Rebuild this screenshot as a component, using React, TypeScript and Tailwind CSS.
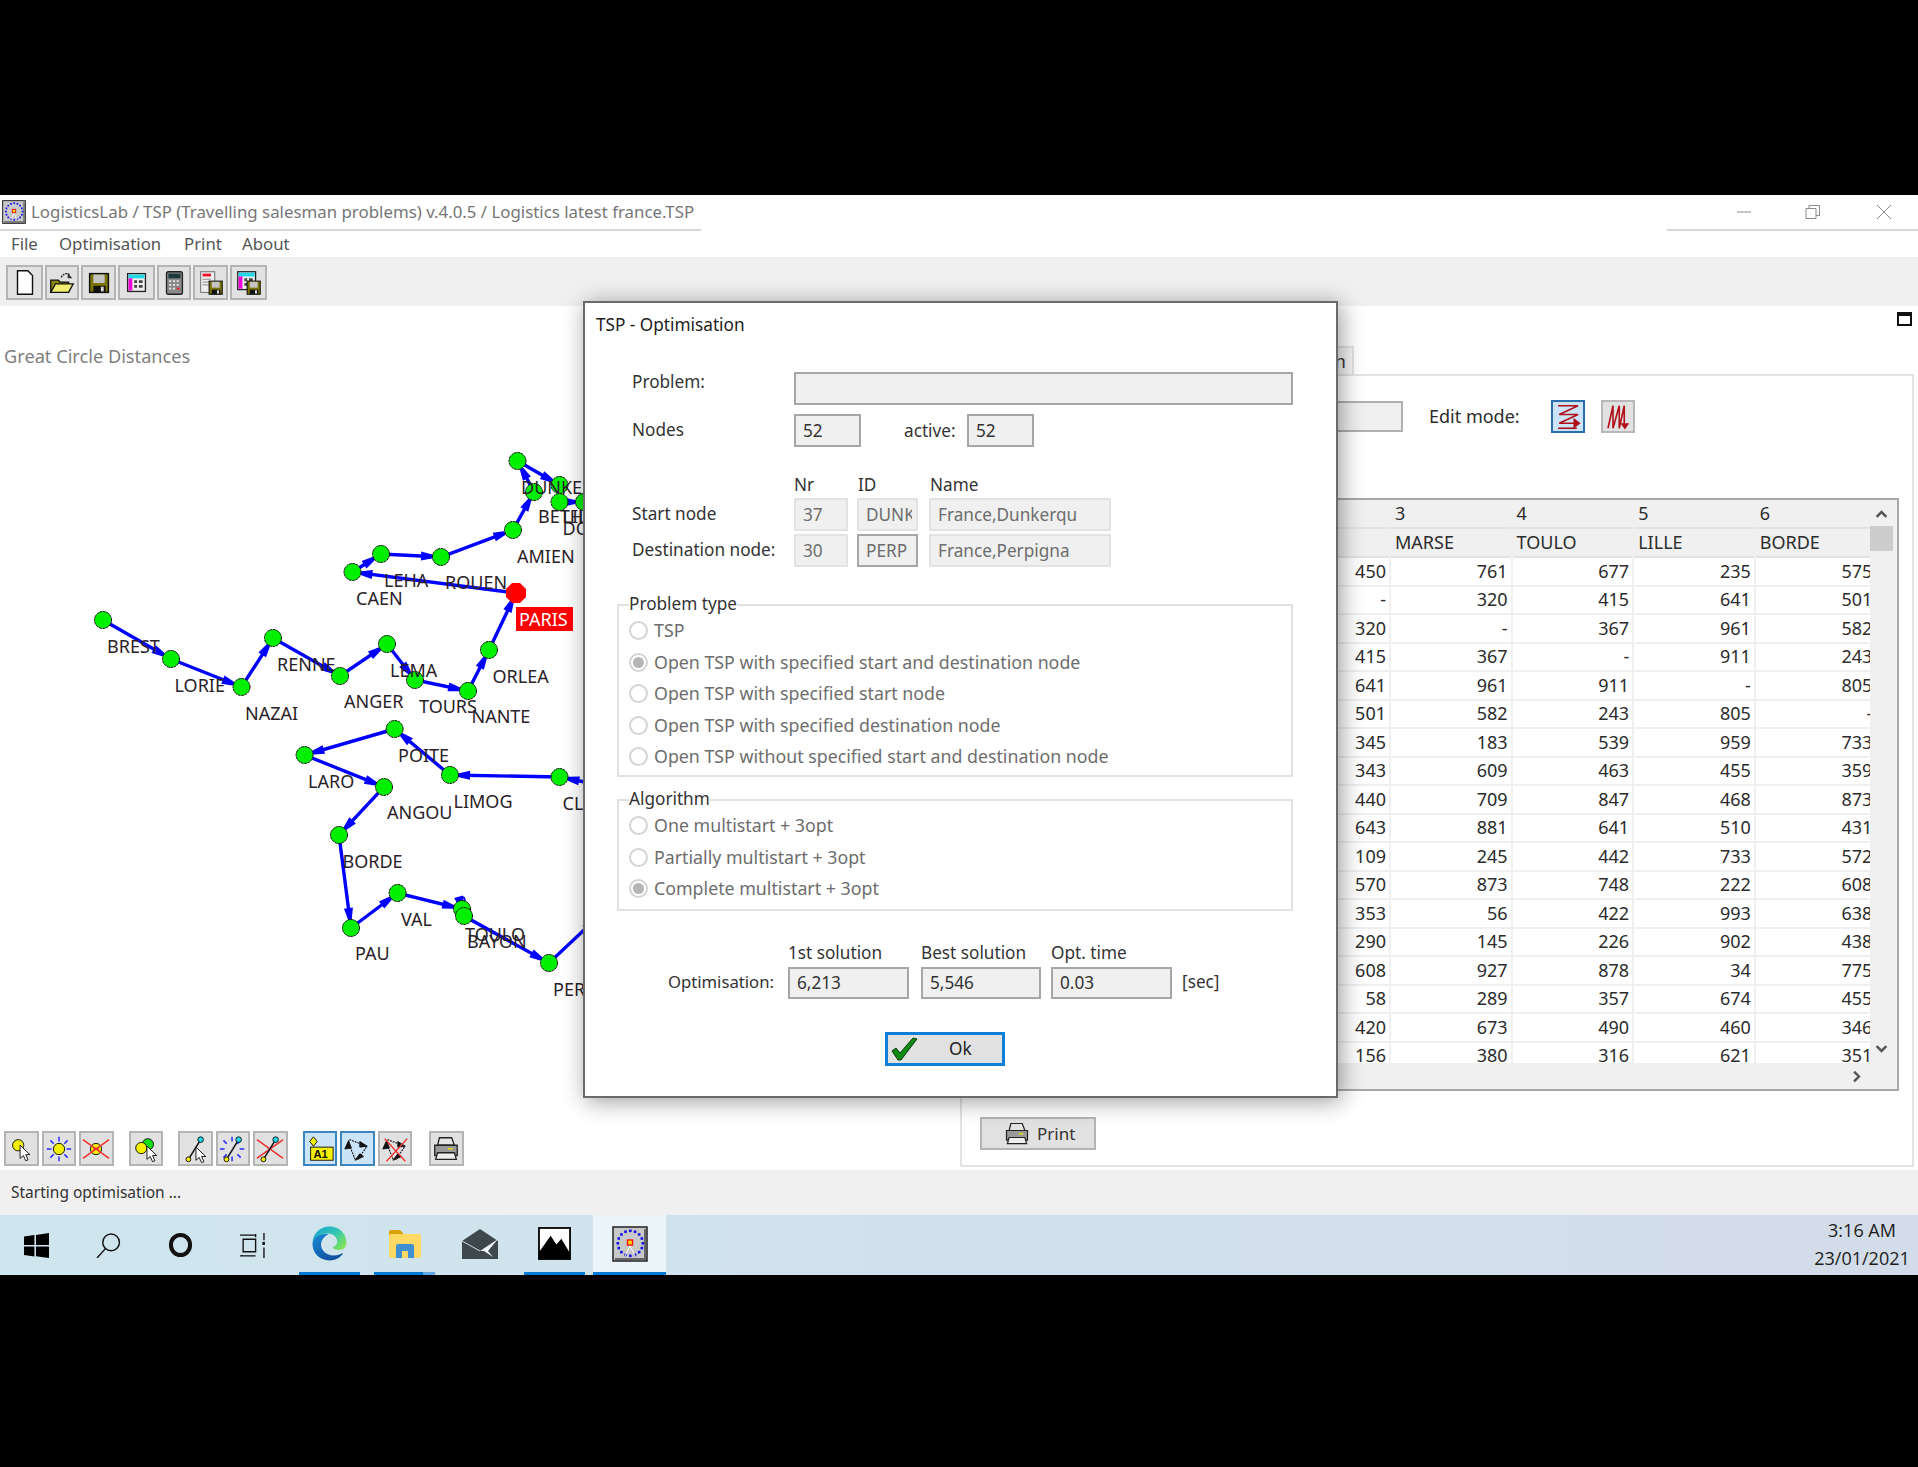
import type { ReactNode } from 'react';

const nodes: Record<string, [number, number]> = {
  BREST: [103, 620], LORIE: [171, 659], NAZAI: [241.5, 687], RENNE: [273, 638], ANGER: [340, 676],
  LEMA: [387, 644], TOURS: [415, 680], NANTE: [468, 691], ORLEA: [489, 650], PARIS: [516, 593],
  CAEN: [352.5, 572], LEHA: [381, 554], ROUEN: [441, 557], AMIEN: [513, 530], BETHU: [534, 492],
  DUNKE: [517.5, 461], LILLE: [559.5, 485], DOUAI: [559.5, 502], ARRAS: [584, 502],
  CLERM: [559.5, 777], LIMOG: [450, 775], POITE: [394.6, 729], LARO: [304.6, 755], ANGOU: [384, 787],
  BORDE: [339, 835], PAU: [351, 928], VAL: [397.6, 893], TOULO: [462, 909], BAYON: [464, 916], PER: [549, 963],
  EAST: [600, 915], RIGHT: [600, 785],
};

const chains = [
  ['BREST', 'LORIE', 'NAZAI', 'RENNE', 'ANGER', 'LEMA', 'TOURS', 'NANTE', 'ORLEA', 'PARIS', 'CAEN', 'LEHA', 'ROUEN', 'AMIEN', 'BETHU', 'DUNKE', 'LILLE', 'DOUAI', 'ARRAS'],
  ['RIGHT', 'CLERM', 'LIMOG', 'POITE', 'LARO', 'ANGOU', 'BORDE', 'PAU', 'VAL', 'TOULO', 'BAYON', 'PER', 'EAST'],
];

const labels: [string, number, number][] = [
  ['BREST', 107, 653], ['LORIE', 174.5, 692], ['NAZAI', 245, 720], ['RENNE', 277, 671], ['ANGER', 344, 708],
  ['LEMA', 390, 677], ['TOURS', 419, 713], ['NANTE', 471.5, 723], ['ORLEA', 492.5, 683], ['AMIEN', 517, 563],
  ['ROUEN', 445, 589], ['LEHA', 384, 587], ['CAEN', 356, 605], ['DUNKE', 521, 494], ['BETHU', 538, 523],
  ['LILLE', 562.6, 523], ['DOUAI', 562.6, 535], ['POITE', 398, 762], ['LARO', 308, 788], ['LIMOG', 453.5, 808],
  ['CLERM', 562.6, 810], ['ANGOU', 387, 819], ['BORDE', 342.5, 868], ['VAL', 401, 926], ['PAU', 355, 960],
  ['TOULO', 465, 941], ['BAYON', 467, 948], ['PERPI', 553, 996],
];

const columns = [
  { nr: '2', name: '', values: ['450', '-', '320', '415', '641', '501', '345', '343', '440', '643', '109', '570', '353', '290', '608', '58', '420', '156'] },
  { nr: '3', name: 'MARSE', values: ['761', '320', '-', '367', '961', '582', '183', '609', '709', '881', '245', '873', '56', '145', '927', '289', '673', '380'] },
  { nr: '4', name: 'TOULO', values: ['677', '415', '367', '-', '911', '243', '539', '463', '847', '641', '442', '748', '422', '226', '878', '357', '490', '316'] },
  { nr: '5', name: 'LILLE', values: ['235', '641', '961', '911', '-', '805', '959', '455', '468', '510', '733', '222', '993', '902', '34', '674', '460', '621'] },
  { nr: '6', name: 'BORDE', values: ['575', '501', '582', '243', '805', '-', '733', '359', '873', '431', '572', '608', '638', '438', '775', '455', '346', '351'] },
];

function arrowHead(from: [number, number], to: [number, number]) {
  const dx = to[0] - from[0];
  const dy = to[1] - from[1];
  const len = Math.hypot(dx, dy);
  const ux = dx / len;
  const uy = dy / len;
  const tip = [to[0] - ux * 9, to[1] - uy * 9];
  const base = [to[0] - ux * 20, to[1] - uy * 20];
  const w = 4.5;
  const blunt = 2;
  const tipW = [tip[0] - uy * blunt, tip[1] + ux * blunt, tip[0] + uy * blunt, tip[1] - ux * blunt];
  return `${tipW[0]},${tipW[1]} ${base[0] - uy * w},${base[1] + ux * w} ${base[0] + uy * w},${base[1] - ux * w} ${tipW[2]},${tipW[3]}`;
}

function TspMap() {
  return (
    <svg viewBox="0 380 960 750" width={960} height={750} className="block">
      {chains.map((chain) => (
        <g key={chain[0]}>
          <polyline points={chain.map((n) => nodes[n].join(',')).join(' ')} fill="none" stroke="#0000ff" strokeWidth={3.4} />
          {chain.slice(1).map((n, i) => (
            <polygon key={n} points={arrowHead(nodes[chain[i]], nodes[n])} fill="#0000ff" />
          ))}
        </g>
      ))}
      <path d="M459 905q0-8 3.500-8q3 0 2 8" fill="none" stroke="#0000ff" strokeWidth={2} />
      {Object.entries(nodes)
        .filter(([n]) => n !== 'PARIS' && n !== 'EAST' && n !== 'RIGHT')
        .map(([n, p]) => (
          <circle key={n} cx={p[0]} cy={p[1]} r={8.5} fill="#00f000" stroke="#111" strokeWidth={1} strokeDasharray="3 0.6" />
        ))}
      <polygon points="512,583 520,583 526,589 526,597 520,603 512,603 506,597 506,589" fill="#ff0000" />
      {labels.map(([t, x, y]) => (
        <text key={t} x={x} y={y} fontSize={18} fill="#2a2228" fontFamily="'Noto Sans', sans-serif">
          {t}
        </text>
      ))}
      <rect x={516} y={607} width={57} height={24} fill="#ff0000" />
      <text x={519} y={626} fontSize={18} fill="#fff" fontFamily="'Noto Sans', sans-serif">PARIS</text>
    </svg>
  );
}

function IconButton({ w, active, children, extra }: { w: string; active?: boolean; children: ReactNode; extra?: string }) {
  return (
    <div
      className={`${w} ${extra ?? ''} h-[35px] shrink-0 flex items-center justify-center border-2 ${
        active ? 'bg-[#cce4f7] border-[#3d85c0]' : 'bg-[#e1e1e1] border-[#b4b4b4]'
      }`}
    >
      {children}
    </div>
  );
}

function Svg({ children }: { children: ReactNode }) {
  return (
    <svg viewBox="0 0 32 32" width={30} height={30} className="shrink-0">
      {children}
    </svg>
  );
}

const floppy = (x: number, y: number, s: number) => (
  <g transform={`translate(${x} ${y}) scale(${s})`}>
    <rect x={0} y={0} width={20} height={20} fill="#7a7400" stroke="#111" strokeWidth={1.6} />
    <rect x={4} y={1} width={12} height={9} fill="#c4c4c4" />
    <rect x={4} y={13} width={13} height={7} fill="#111" />
    <rect x={12} y={14} width={3} height={5} fill="#ddd" />
  </g>
);

const grid = (x: number, y: number) => (
  <g transform={`translate(${x} ${y})`}>
    <rect width={19} height={19} fill="#eee" stroke="#222" strokeWidth={1.4} />
    <rect x={1} y={1} width={17} height={4} fill="#22d8e8" />
    <rect x={1} y={5} width={4} height={13} fill="#f000d8" />
    <path d="M7 7h3v3h-3zM12 7h4v3h-4zM7 12h3v3h-3zM12 12h4v3h-4z" fill="#444" />
  </g>
);

const cursor = (x: number, y: number) => (
  <path
    transform={`translate(${x} ${y})`}
    d="M0 0v14l3.500-3 2.500 5.500 2.500-1-2.500-5.500h4.500z"
    fill="#fff"
    stroke="#111"
    strokeWidth={1}
  />
);

const rays = (cx: number, cy: number) => (
  <g stroke="#2a2aff" strokeWidth={1.6}>
    {[0, 45, 90, 135, 180, 225, 270, 315].map((a) => (
      <line
        key={a}
        x1={cx + 8 * Math.cos((a * Math.PI) / 180)}
        y1={cy + 8 * Math.sin((a * Math.PI) / 180)}
        x2={cx + 13 * Math.cos((a * Math.PI) / 180)}
        y2={cy + 13 * Math.sin((a * Math.PI) / 180)}
      />
    ))}
  </g>
);

const crossOut = (
  <g stroke="#f03030" strokeWidth={1.6}>
    <line x1={2} y1={6} x2={30} y2={26} />
    <line x1={30} y1={6} x2={2} y2={26} />
  </g>
);

const lineWithEnds = (
  <g>
    <line x1={22} y1={6} x2={9} y2={27} stroke="#111" strokeWidth={1.6} />
    <circle cx={22} cy={6} r={3} fill="#22d8e8" stroke="#111" />
    <circle cx={9} cy={27} r={2.600} fill="#f4f000" stroke="#111" />
  </g>
);

const routeArrows = (
  <g stroke="#111" fill="#111">
    <path d="M8 6l16 6M26 14l-9 13M14 27l-7-17" fill="none" strokeWidth={1.2} strokeDasharray="2 1" />
    <path d="M27 13l-8-5 0 6zM14 28l5-7 4 3zM7 7l-4 9 7-1z" />
  </g>
);

const printer = (
  <g>
    <path d="M9 4h13l3 8H7z" fill="#e4e4e4" stroke="#222" strokeWidth={1.4} />
    <path d="M4 12h24v11H4z" fill="#9a9a9a" stroke="#222" strokeWidth={1.4} />
    <path d="M7 20h18l2 7H5z" fill="#eee" stroke="#222" strokeWidth={1.4} />
    <rect x={18} y={15} width={5} height={1.600} fill="#e8e000" />
  </g>
);

const topTools = [
  { w: 'w-[37px]', icon: <path d="M8 3h11l5 5v20H8z" fill="#fff" stroke="#111" strokeWidth={1.5} /> },
  {
    w: 'w-[34px]',
    icon: (
      <g>
        <path d="M4 26V13h8l2 2h9v11z" fill="#8c8600" stroke="#111" strokeWidth={1.4} />
        <path d="M4 26l5-9h19l-5 9z" fill="#f0ec70" stroke="#111" strokeWidth={1.4} />
        <path d="M15 10q4-6 9-3" fill="none" stroke="#333" strokeWidth={1.5} strokeDasharray="2 1" />
        <path d="M27 11l-5-6 0 6z" fill="#333" />
      </g>
    ),
  },
  { w: 'w-[35px]', icon: floppy(6, 6, 1) },
  { w: 'w-[37px]', icon: grid(6, 6) },
  {
    w: 'w-[34px]',
    icon: (
      <g>
        <rect x={8} y={4} width={17} height={24} rx={2} fill="#8a8a8a" stroke="#222" strokeWidth={1.4} />
        <rect x={10} y={6} width={13} height={5} fill="#1d3a3a" />
        <path d="M11 13h2v2h-2zM15 13h2v2h-2zM19 13h2v2h-2zM11 17h2v2h-2zM15 17h2v2h-2zM19 17h2v2h-2zM11 21h2v2h-2zM15 21h2v2h-2z" fill="#eee" />
        <rect x={19} y={21} width={3} height={2} fill="#f02020" />
      </g>
    ),
  },
  {
    w: 'w-[35px]',
    icon: (
      <g>
        <rect x={5} y={4} width={15} height={22} fill="#eee" stroke="#666" />
        <rect x={7} y={6} width={9} height={3} fill="#f01030" />
        <path d="M7 12h9M7 15h7M7 18h7" stroke="#888" />
        {floppy(14, 14, 0.7)}
      </g>
    ),
  },
  {
    w: 'w-[37px]',
    icon: (
      <g>
        {grid(4, 4)}
        {floppy(14, 14, 0.7)}
      </g>
    ),
  },
];

const yellowDot = (cx: number, cy: number, r = 5) => <circle cx={cx} cy={cy} r={r} fill="#f4f000" stroke="#111" />;

const bottomTools: { ml?: string; active?: boolean; icon: ReactNode }[] = [
  { icon: <g>{yellowDot(13, 12, 6)}{cursor(15, 12)}</g> },
  { ml: 'ml-[3px]', icon: <g>{rays(16, 16)}{yellowDot(16, 16, 6)}</g> },
  { ml: 'ml-[3px]', icon: <g>{yellowDot(16, 16, 6)}<rect x={13} y={15} width={6} height={2} fill="#f03030" />{crossOut}</g> },
  { ml: 'ml-[15px]', icon: <g><circle cx={18} cy={11} r={6} fill="#10e010" stroke="#111" />{yellowDot(11, 15, 6)}{cursor(17, 13)}</g> },
  { ml: 'ml-[15px]', icon: <g>{lineWithEnds}{cursor(17, 14)}</g> },
  { ml: 'ml-[3px]', icon: <g>{rays(15, 16)}{lineWithEnds}</g> },
  { ml: 'ml-[3px]', icon: <g>{crossOut}{lineWithEnds}</g> },
  {
    ml: 'ml-[15px]',
    active: true,
    icon: (
      <g>
        <path d="M9 3l4 5-4 5-4-5z" fill="#f4f000" stroke="#111" />
        <rect x={6} y={14} width={24} height={14} fill="#f4f000" stroke="#111" />
        <text x={9} y={26} fontSize={12} fontWeight={700} fill="#111" fontFamily="'Liberation Sans', sans-serif">A1</text>
      </g>
    ),
  },
  { ml: 'ml-[3px]', active: true, icon: routeArrows },
  { ml: 'ml-[3px]', icon: <g>{routeArrows}<g stroke="#f03030" strokeWidth={1.4}><line x1={5} y1={5} x2={27} y2={29} /><line x1={29} y1={5} x2={7} y2={29} /></g></g> },
  { ml: 'ml-[17px]', icon: printer },
];

function Field({ w, h = 'h-[33px]', light, dark, value, muted }: { w: string; h?: string; light?: boolean; dark?: boolean; value?: string; muted?: boolean }) {
  return (
    <div
      className={`${w} ${h} shrink-0 flex items-center pl-[7px] pr-[4px] whitespace-nowrap bg-[#f0f0f0] border-2 ${
        light && !dark ? 'border-[#e3e3e3]' : 'border-[#a6a6a6]'
      } ${muted ? 'text-[#6d6d6d]' : 'text-[#333]'}`}
    >
      <span className="block w-full overflow-hidden">{value}</span>
    </div>
  );
}

function Radio({ label, checked }: { label: string; checked?: boolean }) {
  return (
    <div className="h-[31.5px] flex items-center text-[#6d6d6d] text-[17.8px]">
      <span className="ml-[10px] w-[19px] h-[19px] shrink-0 rounded-full border-2 border-[#d4d4d4] flex items-center justify-center">
        {checked && <span className="w-[11px] h-[11px] rounded-full bg-[#b5b5b5]" />}
      </span>
      <span className="ml-[6px] -mt-[1px] whitespace-nowrap">{label}</span>
    </div>
  );
}

function Group({ title, h, pt, children }: { title: string; h: string; pt: string; children: ReactNode }) {
  return (
    <div className={`relative ml-[32px] w-[676px] ${h} ${pt} border-2 border-[#e2e2e2]`}>
      <span className="absolute -top-[14px] left-[10px] bg-white text-[#333] leading-[24px]">{title}</span>
      {children}
    </div>
  );
}

function OptimisationDialog() {
  return (
    <div className="absolute left-[583px] top-[106px] w-[755px] h-[797px] z-10 bg-white border-2 border-[#6a6a6a] shadow-[3px_3px_22px_rgba(0,0,0,0.4)] text-[#333] text-[17.2px] leading-[24px]">
      <div className="pl-[11px] mt-[10px] mb-[1px] text-[#222]">TSP - Optimisation</div>

      <div className="flex items-start ml-[47px] mt-[35px]">
        <span className="w-[162px] -mt-[2px]">Problem:</span>
        <Field w="w-[499px]" />
      </div>
      <div className="flex items-center ml-[47px] mt-[9px]">
        <span className="w-[162px] -mt-[2px]">Nodes</span>
        <Field w="w-[67px]" value="52" />
        <span className="ml-[43px] w-[63px]">active:</span>
        <Field w="w-[67px]" value="52" />
      </div>

      <div className="flex ml-[209px] mt-[26px]">
        <span className="w-[64px]">Nr</span>
        <span className="w-[72px]">ID</span>
        <span>Name</span>
      </div>
      <div className="flex items-center ml-[47px] mt-[1px]">
        <span className="w-[162px] -mt-[2px]">Start node</span>
        <Field w="w-[54px]" light muted value="37" />
        <div className="w-[9px] shrink-0" />
        <Field w="w-[61px]" light muted value="DUNK" />
        <div className="w-[11px] shrink-0" />
        <Field w="w-[182px]" light muted value="France,Dunkerqu" />
      </div>
      <div className="flex items-center ml-[47px] mt-[3px]">
        <span className="w-[162px] -mt-[2px] whitespace-nowrap">Destination node:</span>
        <Field w="w-[54px]" light muted value="30" />
        <div className="w-[9px] shrink-0" />
        <Field w="w-[61px]" dark muted value="PERP" />
        <div className="w-[11px] shrink-0" />
        <Field w="w-[182px]" light muted value="France,Perpigna" />
      </div>

      <div className="h-[37px]" />
      <Group title="Problem type" h="h-[173px]" pt="pt-[9px]">
        <Radio label="TSP" />
        <Radio label="Open TSP with specified start and destination node" checked />
        <Radio label="Open TSP with specified start node" />
        <Radio label="Open TSP with specified destination node" />
        <Radio label="Open TSP without specified start and destination node" />
      </Group>
      <div className="h-[22px]" />
      <Group title="Algorithm" h="h-[112px]" pt="pt-[9px]">
        <Radio label="One multistart + 3opt" />
        <Radio label="Partially multistart + 3opt" />
        <Radio label="Complete multistart + 3opt" checked />
      </Group>

      <div className="flex ml-[203px] mt-[30px] h-[24px]">
        <span className="w-[133px]">1st solution</span>
        <span className="w-[130px]">Best solution</span>
        <span>Opt. time</span>
      </div>
      <div className="flex items-center mt-[2px]">
        <span className="w-[189px] -mt-[2px] text-right text-[16.7px]">Optimisation:</span>
        <div className="w-[14px]" />
        <Field w="w-[121px]" h="h-[32px]" value="6,213" />
        <div className="w-[12px]" />
        <Field w="w-[120px]" h="h-[32px]" value="5,546" />
        <div className="w-[10px]" />
        <Field w="w-[121px]" h="h-[32px]" value="0.03" />
        <span className="ml-[10px] -mt-[2px]">[sec]</span>
      </div>

      <div className="ml-[300px] mt-[33px] w-[120px] h-[34px] border-[3px] border-[#0f7fd8] bg-[#e1e1e1] flex items-center relative">
        <svg viewBox="0 0 28 24" width={28} height={24} className="ml-[3px]">
          <path d="M1 14l4-3 4 5L22 1l4 1L10 23H7z" fill="#0c8a12" stroke="#0a3d0a" strokeWidth={1} />
        </svg>
        <span className="ml-[30px] text-[#222]">Ok</span>
      </div>
    </div>
  );
}

function AppIcon({ size }: { size: number }) {
  const dots = Array.from({ length: 16 }, (_, i) => (i * Math.PI * 2) / 16);
  return (
    <svg viewBox="0 0 36 36" width={size} height={size} className="shrink-0">
      <rect x={1} y={1} width={34} height={34} fill="#c8c8c8" stroke="#222" strokeWidth={1.5} />
      <path d="M33 3v30H3" fill="none" stroke="#666" strokeWidth={2} />
      {dots.map((a) => (
        <rect key={a} x={17 + 12.500 * Math.cos(a)} y={16 + 12.500 * Math.sin(a)} width={2.600} height={2.600} fill="#1414e8" />
      ))}
      <path d="M18 20l-5 10M18 20l5 10" stroke="#fff" strokeWidth={1} />
      <rect x={15.500} y={14} width={5} height={5} fill="#ffe000" stroke="#ee1010" strokeWidth={1.4} />
    </svg>
  );
}

function TaskSlot({ bar, children }: { bar?: string; children: ReactNode }) {
  return (
    <div className="w-[75px] flex flex-col">
      <div className="flex-1 flex items-center justify-center">{children}</div>
      <div className={`h-[3px] ml-[7px] ${bar ? `${bar} bg-[#0078d7]` : ''}`} />
    </div>
  );
}

function Taskbar() {
  return (
    <div className="h-[60px] flex bg-gradient-to-r from-[#cfe6ee] to-[#d3dce9] text-[#1c1c1c]">
      <div className="w-[72px] flex items-center justify-center">
        <svg viewBox="0 0 24 24" width={25} height={25}>
          <path d="M0 3.400l10-1.400v9.500H0zM11.500 1.800L24 0v11.500H11.500zM0 13h10v9.500L0 21zM11.500 13H24v11l-12.500-1.800z" fill="#000" />
        </svg>
      </div>
      <div className="w-[72px] flex items-center justify-center">
        <svg viewBox="0 0 24 24" width={25} height={25} fill="none" stroke="#111" strokeWidth={1.4}>
          <circle cx={14.500} cy={9} r={8} />
          <line x1={9} y1={15} x2={1} y2={24} />
        </svg>
      </div>
      <div className="w-[72px] flex items-center justify-center">
        <span className="w-[23px] h-[24px] rounded-full border-[4px] border-[#111]" />
      </div>
      <div className="w-[72px] flex items-center justify-center">
        <svg viewBox="0 0 24 24" width={25} height={25} fill="none" stroke="#111" strokeWidth={1.3}>
          <path d="M0 2h15M3 6h12v12H3zM0 22h15M2 22v-1M15 1v3M23 0v7M23 14v10" />
          <rect x={21.500} y={8.500} width={3} height={3} fill="#111" stroke="none" />
        </svg>
      </div>
      <div className="w-[4px]" />
      <TaskSlot bar="w-[61px]">
        <svg viewBox="0 0 24 24" width={37} height={37}>
          <defs>
            <linearGradient id="edgeTop" x1="0" y1="0" x2="1" y2="0.700">
              <stop offset="0" stopColor="#1a9fd8" />
              <stop offset="0.600" stopColor="#33c7b0" />
              <stop offset="1" stopColor="#7ee25a" />
            </linearGradient>
            <linearGradient id="edgeBottom" x1="0" y1="0" x2="0.700" y2="1">
              <stop offset="0" stopColor="#1a8ad8" />
              <stop offset="1" stopColor="#0c4f9c" />
            </linearGradient>
          </defs>
          <path d="M1 12C1 5.500 6 1 12 1c6.500 0 11 4.700 11 10.500 0 3-2.200 4.700-5 4.700-2 0-3.500-.8-4-1.800 2-.7 3-2 3-3.700 0-2.700-2.500-5.200-6-5.200C6.500 5.500 2 8 1 12z" fill="url(#edgeTop)" />
          <path d="M1 12c-.2 6 4.500 11 11 11 3.500 0 6.500-1.500 8.500-4 .3-.5-.1-.8-.6-.5-1.200.7-3 1.300-5.400 1.300-4.500 0-8-3.500-8-7 0-3 2-5.500 5-6.800C6.500 5 1.500 7.500 1 12z" fill="url(#edgeBottom)" />
        </svg>
      </TaskSlot>
      <div className="w-[75px] flex flex-col">
        <div className="flex-1 flex items-center justify-center">
          <svg viewBox="0 0 32 28" width={32} height={28}>
            <path d="M0 2a2 2 0 0 1 2-2h9l3 3h0v3H0z" fill="#d9a000" />
            <rect x={0} y={4} width={32} height={24} rx={2} fill="#ffd964" />
            <path d="M7 28V16a2 2 0 0 1 2-2h14a2 2 0 0 1 2 2v12h-6v-7h-6v7z" fill="#3f8fd2" />
          </svg>
        </div>
        <div className="flex ml-[7px] h-[3px]">
          <div className="w-[49px] bg-[#0078d7]" />
          <div className="w-[12px] bg-[#62a8e5]" />
        </div>
      </div>
      <TaskSlot>
        <svg viewBox="0 0 36 30" width={36} height={30}>
          <path d="M0 12L18 0l18 12v18H0z" fill="#3e474b" />
          <path d="M0 12l18 10" fill="none" stroke="#cfe0ea" strokeWidth={1} />
          <path d="M18 22L36 10 26 22l5 6-9-6z" fill="#f0f5f7" />
        </svg>
      </TaskSlot>
      <TaskSlot bar="w-[61px]">
        <svg viewBox="0 0 34 34" width={33} height={33}>
          <rect x={1} y={1} width={32} height={32} fill="#fff" stroke="#111" strokeWidth={2} />
          <path d="M1 33V26L13 9l6 9 5-6 9 15v6z" fill="#000" />
        </svg>
      </TaskSlot>
      <div className="w-[73px] ml-[1px] flex flex-col bg-[#ebf4f8]">
        <div className="flex-1 flex items-center justify-center">
          <AppIcon size={36} />
        </div>
        <div className="h-[3px] bg-[#0078d7]" />
      </div>
      <div className="ml-auto mr-[6px] w-[100px] text-center text-[18px] font-['Open_Sans',sans-serif]">
        <div className="mt-[1px] leading-[28px]">3:16 AM</div>
        <div className="leading-[28px] whitespace-nowrap">23/01/2021</div>
      </div>
    </div>
  );
}

function DistanceGrid() {
  const rowCount = columns[0].values.length;
  return (
    <div className="ml-[18px] w-[919px] h-[593px] border-2 border-[#a8a8a8] flex flex-col">
      <div className="h-[563px] flex">
        <div className="w-[888px] overflow-hidden">
          <div className="flex w-[1000px]">
            <div className="w-[287.4px] shrink-0 bg-[#f0f0f0] h-[58px]" />
            {columns.map((c) => (
              <div key={c.nr} className="w-[121.6px] shrink-0 border-r-2 border-[#f0f0f0]">
                <div className="h-[29px] pl-[4px] flex items-center bg-[#f0f0f0] border-b-2 border-[#e3e3e3]">{c.nr}</div>
                <div className="h-[29px] pl-[4px] flex items-center bg-[#f0f0f0] border-b-2 border-[#e3e3e3]">{c.name}</div>
                {Array.from({ length: rowCount }, (_, i) => (
                  <div key={i} className="h-[28.5px] pr-[3px] flex items-center justify-end border-b-2 border-[#f0f0f0]">
                    {c.values[i]}
                  </div>
                ))}
              </div>
            ))}
          </div>
        </div>
        <div className="w-[27px] bg-[#f0f0f0] flex flex-col items-center relative">
          <svg viewBox="0 0 16 10" width={13} height={9} className="mt-[10px] -ml-[4px]">
            <path d="M2 8l6-6 6 6" fill="none" stroke="#555" strokeWidth={3} />
          </svg>
          <div className="w-[23px] h-[25px] bg-[#cdcdcd] mt-[7px] -ml-[4px]" />
          <svg viewBox="0 0 16 10" width={13} height={9} className="mt-auto mb-[10px] -ml-[4px]">
            <path d="M2 2l6 6 6-6" fill="none" stroke="#555" strokeWidth={3} />
          </svg>
        </div>
      </div>
      <div className="flex-1 bg-[#f0f0f0] flex items-center justify-end pr-[36px]">
        <svg viewBox="0 0 10 16" width={9} height={13}>
          <path d="M2 2l6 6-6 6" fill="none" stroke="#555" strokeWidth={3} />
        </svg>
      </div>
    </div>
  );
}

function RightPanel() {
  return (
    <div className="w-[958px] flex flex-col">
      <div className="h-[68px] flex">
        <div className="ml-[230px] w-[164px] h-[28px] self-end text-right pr-[6px] bg-[#f5f5f5] border-2 border-b-0 border-[#e3e3e3] leading-[26px] text-[#333]">
          Optimisation
        </div>
        <div className="ml-auto mr-[6px] mt-[6px] w-[15px] h-[14px] border-2 border-t-[4px] border-[#111]" />
      </div>
      <div className="mr-[4px] h-[793px] border-2 border-[#e3e3e3] pt-[24px] text-[#2c2c2c]">
        <div className="flex items-center h-[33px]">
          <div className="ml-[138px] w-[303px] h-[31px] bg-[#f0f0f0] border-2 border-[#b0b0b0]" />
          <span className="ml-[26px] w-[122px] whitespace-nowrap">Edit mode:</span>
          <div className="w-[34px] h-[33px] bg-[#cce4f7] border-2 border-[#2c6fb0] flex items-center justify-center">
            <svg viewBox="0 0 24 24" width={30} height={30} fill="none" stroke="#b0101a" strokeWidth={1.3} className="shrink-0">
              <path d="M4 3h16L5 10h15L5 17h14" />
              <path d="M17 14l4 3-4 3z" fill="#b0101a" />
              <path d="M4 21h15" />
            </svg>
          </div>
          <div className="ml-[16px] w-[34px] h-[33px] bg-[#e1e1e1] border-2 border-[#b8b8b8] flex items-center justify-center">
            <svg viewBox="0 0 24 24" width={30} height={30} fill="none" stroke="#b0101a" strokeWidth={1.3} className="shrink-0">
              <path d="M4 21L8 3v18L13 3v18L17 3v15" />
              <path d="M14 17h7l-3.500 5z" fill="#b0101a" stroke="none" />
            </svg>
          </div>
        </div>
        <div className="h-[65px]" />
        <DistanceGrid />
        <div className="ml-[18px] mt-[26px] w-[116px] h-[33px] bg-[#e1e1e1] border-2 border-[#b4b4b4] flex items-center text-[#333] text-[17px]">
          <svg viewBox="0 0 32 32" width={28} height={28} className="ml-[21px]">
            {printer}
          </svg>
          <span className="ml-[6px]">Print</span>
        </div>
      </div>
    </div>
  );
}

export default function App() {
  return (
    <div className="w-[1918px] h-[1467px] bg-black overflow-hidden pt-[195px] text-[18px] font-['Noto_Sans',sans-serif]">
      <div className="relative bg-white">
        {/* Title bar */}
        <div className="h-[36px] flex">
          <div className="w-[701px] border-b-2 border-[#d8d8d8] flex items-center pl-[2px]">
            <AppIcon size={24} />
            <span className="ml-[5px] text-[16.85px] text-[#767676] whitespace-nowrap">
              LogisticsLab / TSP (Travelling salesman problems) v.4.0.5 / Logistics latest france.TSP
            </span>
          </div>
          <div className="ml-auto w-[251px] border-b-2 border-[#d8d8d8] flex items-center">
            <svg viewBox="0 0 16 16" width={16} height={16} className="ml-[69px]" fill="none" stroke="#8a8a8a" strokeWidth={1}>
              <line x1={1} y1={8} x2={15} y2={8} />
            </svg>
            <svg viewBox="0 0 16 16" width={16} height={16} className="ml-[53px]" fill="none" stroke="#8a8a8a" strokeWidth={1}>
              <path d="M1 4.500h10v10H1zM4 4.500V1.500h10.500v10H11" />
            </svg>
            <svg viewBox="0 0 16 16" width={16} height={16} className="ml-[55px]" fill="none" stroke="#8a8a8a" strokeWidth={1}>
              <path d="M1 1l14 14M15 1L1 15" />
            </svg>
          </div>
        </div>

        {/* Menu */}
        <div className="h-[26px] flex items-center text-[#555] text-[16.8px]">
          <span className="ml-[11px] w-[48px]">File</span>
          <span className="w-[125px]">Optimisation</span>
          <span className="w-[58px]">Print</span>
          <span>About</span>
        </div>

        {/* Toolbar */}
        <div className="h-[49px] bg-[#f0f0f0] flex items-center pl-[6px] pt-[2px] gap-[2px]">
          {topTools.map((t, i) => (
            <IconButton key={i} w={t.w}>
              <Svg>{t.icon}</Svg>
            </IconButton>
          ))}
        </div>

        {/* Content */}
        <div className="h-[864px] flex">
          <div className="w-[960px] flex flex-col">
            <div className="pl-[4px] pt-[37px] h-[74px] text-[18.2px] text-[#808080]">Great Circle Distances</div>
            <TspMap />
            <div className="flex pl-[4px] mt-[1px]">
              {bottomTools.map((t, i) => (
                <IconButton key={i} w="w-[34.5px]" extra={t.ml} active={t.active}>
                  <Svg>{t.icon}</Svg>
                </IconButton>
              ))}
            </div>
          </div>
          <RightPanel />
        </div>

        {/* Status bar */}
        <div className="h-[45px] bg-[#f0f0f0] flex items-center pl-[11px] text-[15.5px] text-[#333]">Starting optimisation ...</div>

        <OptimisationDialog />
      </div>
      <Taskbar />
    </div>
  );
}
